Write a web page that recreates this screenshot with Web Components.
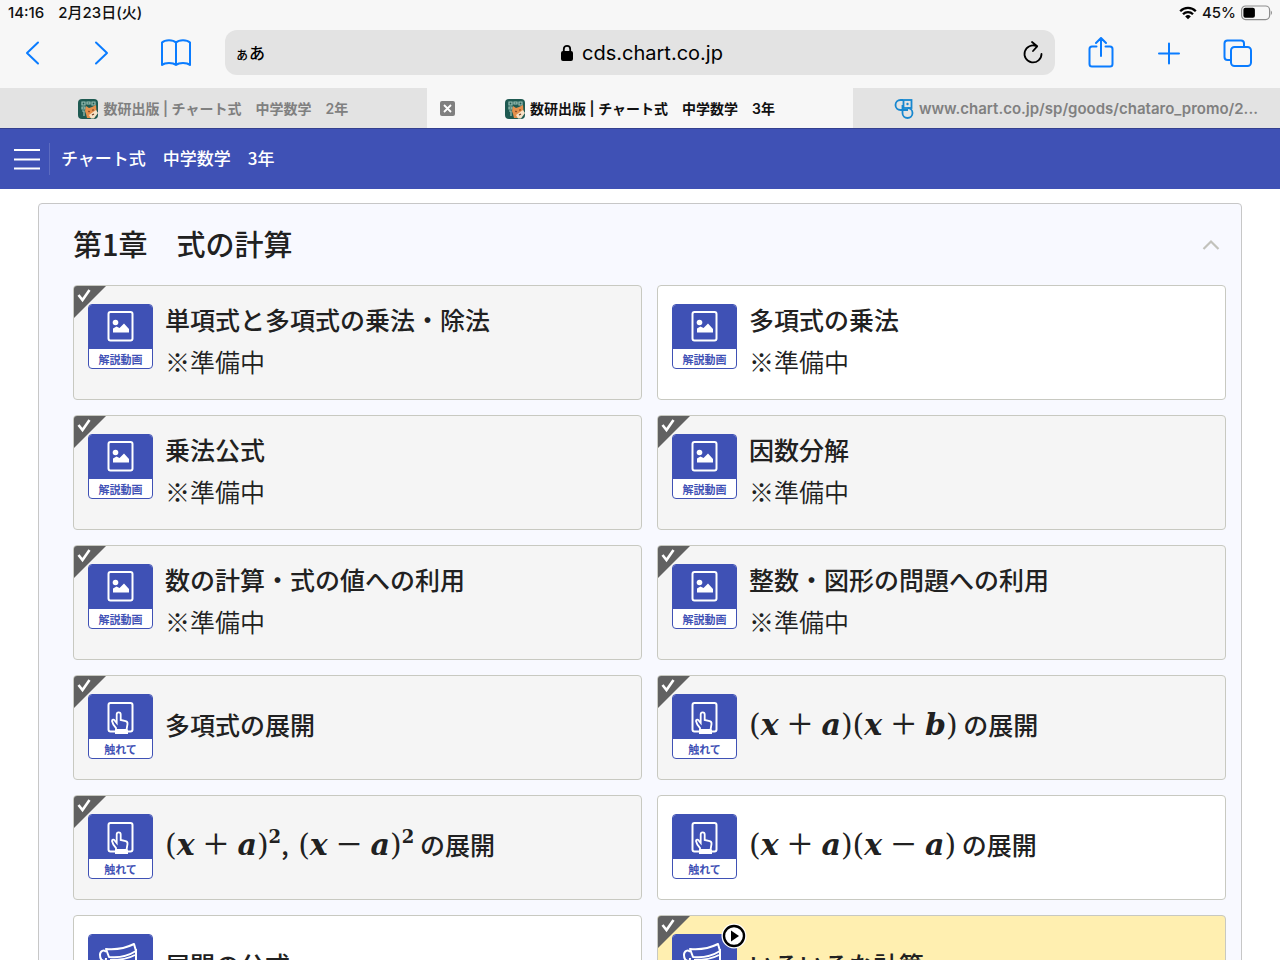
<!DOCTYPE html>
<html lang="ja">
<head>
<meta charset="utf-8">
<meta name="viewport" content="width=device-width, initial-scale=1">
<title>数研出版 | チャート式　中学数学　3年</title>
<style>
	body {
		margin: 0;
		background: #fff;
		color: #212121;
		font-family: Inter, 'Noto Sans CJK JP', sans-serif;
		--page-font: 'Noto Sans CJK JP', sans-serif;
	}
</style>
</head>
<body>
<chart-app>
	<status-bar slot="chrome" time="14:16" date="2月23日(火)" battery="45"></status-bar>
	<browser-toolbar slot="chrome" host="cds.chart.co.jp"></browser-toolbar>
	<tab-strip slot="chrome">
		<browser-tab icon="book">数研出版 | チャート式　中学数学　2年</browser-tab>
		<browser-tab icon="book" active>数研出版 | チャート式　中学数学　3年</browser-tab>
		<browser-tab icon="chart">www.chart.co.jp/sp/goods/chataro_promo/2...</browser-tab>
	</tab-strip>
	<app-header slot="chrome">チャート式　中学数学　3年</app-header>
	<chapter-panel heading="第1章　式の計算">
		<lesson-card kind="video" done note="※準備中">単項式と多項式の乗法・除法</lesson-card>
		<lesson-card kind="video" note="※準備中">多項式の乗法</lesson-card>
		<lesson-card kind="video" done note="※準備中">乗法公式</lesson-card>
		<lesson-card kind="video" done note="※準備中">因数分解</lesson-card>
		<lesson-card kind="video" done note="※準備中">数の計算・式の値への利用</lesson-card>
		<lesson-card kind="video" done note="※準備中">整数・図形の問題への利用</lesson-card>
		<lesson-card kind="touch" done>多項式の展開</lesson-card>
		<lesson-card kind="touch" done><math-text>(x+a)(x+b)</math-text> の展開</lesson-card>
		<lesson-card kind="touch" done><math-text>(x+a)^2</math-text>,<math-text>(x−a)^2</math-text> の展開</lesson-card>
		<lesson-card kind="touch"><math-text>(x+a)(x−a)</math-text> の展開</lesson-card>
		<lesson-card kind="cards">展開の公式</lesson-card>
		<lesson-card kind="cards" done current>いろいろな計算</lesson-card>
	</chapter-panel>
</chart-app>

<script>
class ChartApp extends HTMLElement {
	connectedCallback() {
		this.attachShadow({ mode: 'open' })
		this.shadowRoot.innerHTML = `
		<style>
			:host {
				display: flex;
				flex-direction: column;
				height: 100vh;
			}
			main {
				flex: 1;
				min-height: 0;
				overflow-y: auto;
				scrollbar-width: none;
				padding: 14px 38px;
			}
		</style>
		<slot name="chrome"></slot>
		<main><slot></slot></main>
		`;
	}
}

class StatusBar extends HTMLElement {
	connectedCallback() {
		let battery = this.getAttribute('battery');
		this.attachShadow({ mode: 'open' })
		this.shadowRoot.innerHTML = `
		<style>
			:host {
				display: flex;
				align-items: center;
				gap: 14px;
				height: 26px;
				padding: 0 8px;
				background: #f7f7f7;
				color: #111;
				font-size: 15px;
				line-height: 24px;
				font-weight: 500;
				white-space: nowrap;
			}
			.right {
				display: flex;
				align-items: center;
				gap: 5px;
				margin-left: auto;
			}
			svg { display: block; }
		</style>
		<span>${this.getAttribute('time')}</span>
		<span>${this.getAttribute('date')}</span>
		<div class="right">
			<svg width="18" height="14" viewBox="0 0 18 14" fill="none" stroke="#000" stroke-width="2.3">
				<path d="M1.2 5.2a11 11 0 0 1 15.6 0M4 8.2a7 7 0 0 1 10 0"/>
				<path d="M9 13.2L6.2 10.4a4 4 0 0 1 5.6 0z" fill="#000" stroke="none"/>
			</svg>
			<span>${battery}%</span>
			<svg width="31" height="16" viewBox="0 0 31 16">
				<rect x=".6" y="1" width="28" height="13.6" rx="4" fill="none" stroke="#8d8d8d" stroke-width="1.2"/>
				<rect x="2.4" y="2.8" width="11.5" height="10" rx="2" fill="#000"/>
				<path d="M29.800 5.4a3 3 0 0 1 0 4.8z" fill="#8d8d8d"/>
			</svg>
		</div>
		`;
	}
}

class BrowserToolbar extends HTMLElement {
	connectedCallback() {
		this.attachShadow({ mode: 'open' })
		this.shadowRoot.innerHTML = `
		<style>
			:host {
				display: flex;
				align-items: center;
				height: 62px;
				padding: 0 27px 9px 25px;
				box-sizing: border-box;
				background: #f7f7f7;
				--blue: #0a7cff;
			}
			button {
				border: 0;
				padding: 0;
				background: none;
				color: inherit;
				font: inherit;
				display: block;
			}
			svg {
				display: block;
				fill: none;
				stroke: var(--blue);
				stroke-width: 2;
				stroke-linecap: round;
				stroke-linejoin: round;
			}
			.nav { display: flex; gap: 52px; margin-right: 32px; }
			.actions { display: flex; gap: 36px; margin-left: 30px; }
			.address {
				flex: 1;
				display: flex;
				align-items: center;
				height: 45px;
				padding: 0 10px;
				border-radius: 12px;
				background: #e3e3e3;
				color: #000;
			}
			.aa { width: 42px; text-align: left; font-size: 16px; font-weight: 500; white-space: nowrap; font-family: var(--page-font); line-height: 24px; }
			.aa small { font-size: 14px; }
			.host {
				flex: 1;
				display: flex;
				align-items: center;
				justify-content: center;
				gap: 9px;
				font-size: 20px;
			}
			.reload svg { stroke: #000; stroke-width: 1.8; }
			.reload { width: 24px; margin-left: 14px; }
		</style>
		<div class="nav">
			<button aria-label="戻る"><svg width="16" height="32"><path d="M13 5.500L2 16l11 10.500"/></svg></button>
			<button aria-label="進む"><svg width="16" height="32"><path d="M3 5.500L14 16L3 26.500"/></svg></button>
			<button aria-label="ブックマーク"><svg width="32" height="32"><path d="M15 5.500C12 2.500 4 2.500 1 5.500V28c3-2.800 11-2.800 14 0 3-2.800 11-2.800 14 0V5.500c-3-3-11-3-14 0zM15 5.500V28"/></svg></button>
		</div>
		<div class="address">
			<button class="aa" aria-label="表示メニュー"><small>ぁ</small>あ</button>
			<div class="host">
				<svg width="12" height="18" viewBox="0 0 12 18"><rect x="1" y="8" width="10" height="8" rx="1" fill="#000" stroke="#000"/><path d="M2.800 8V5a3.200 3.200 0 0 1 6.400 0v3" stroke="#000" stroke-width="1.800"/></svg>
				<span>${this.getAttribute('host')}</span>
			</div>
			<button class="reload" aria-label="再読み込み"><svg width="24" height="26" viewBox="0 0 24 26"><path d="M20.500 14a8.500 8.500 0 1 1-5-7.800M11 2l5.200 4.300L12 11"/></svg></button>
		</div>
		<div class="actions">
			<button aria-label="共有"><svg width="32" height="32"><path d="M11.500 9.500H7a2.500 2.500 0 0 0-2.500 2.500v15A2.500 2.500 0 0 0 7 29.500h18a2.500 2.500 0 0 0 2.500-2.500V12A2.500 2.500 0 0 0 25 9.500h-4.500M16 19V1.500M11 6l5-5 5 5"/></svg></button>
			<button aria-label="新規タブ"><svg width="32" height="32"><path d="M16 6.500v20M6 16.500h20"/></svg></button>
			<button aria-label="タブ一覧"><svg width="32" height="32"><rect x="10" y="10" width="20" height="19" rx="3.500"/><path d="M9.500 23H6.500a3 3 0 0 1-3-3V6.500A3 3 0 0 1 6.500 3.500h13.500a3 3 0 0 1 3 3V9.500"/></svg></button>
		</div>
		`;
	}
}

class TabStrip extends HTMLElement {
	connectedCallback() {
		this.attachShadow({ mode: 'open' })
		this.shadowRoot.innerHTML = `
		<style>
			:host {
				display: grid;
				grid-template-columns: repeat(3, 1fr);
				height: 41px;
				background: #f7f7f7;
				border-bottom: 1px solid #34408f;
				box-sizing: border-box;
			}
		</style>
		<slot></slot>
		`;
	}
}

const tabIcons = {
	book: `
		<rect width="20" height="20" rx="4" fill="#1f5a52"/>
		<path d="M4 3h3v3H4zM9 3h3v2H9zM14 3h3v3h-3zM4 8h3v2H4zM4 12h2v5" fill="none" stroke="#9cc2b6" stroke-width="1.200"/>
		<path d="M7 12l1-5 3 2 3-1 4-2 .5 7-5.500 6H9l-1-4z" fill="#e5904c"/>
		<path d="M11 16l7-5 2 3-4 5.500h-3z" fill="#f7e3c8"/>
		<path d="M10.500 12l1 1M14.500 11.500l1-1M14 16l2-1" stroke="#6d351c" stroke-width="1.200"/>`,
	chart: `
		<g fill="none" stroke="#1787cf" stroke-width="1.800">
			<path d="M9 1H6.500a5 5 0 0 0 0 10H14"/>
			<rect x="9.500" y="1" width="8" height="8"/>
			<path d="M8.500 6v8a5 5 0 1 0 5-5"/>
		</g>
		<circle cx="13.500" cy="5" r="1.200" fill="#1787cf"/>`
};

class BrowserTab extends HTMLElement {
	connectedCallback() {
		let active = this.hasAttribute('active');
		this.attachShadow({ mode: 'open' })
		this.shadowRoot.innerHTML = `
		<style>
			:host {
				display: flex;
				align-items: center;
				min-width: 0;
				padding: 1px 13px 0;
				background: #e3e3e3;
				color: #808080;
				font-size: 14px;
				line-height: 20px;
				font-weight: 600;
			}
			:host([active]) {
				background: #f7f7f7;
				color: #111;
			}
			.close {
				flex: none;
				width: 15px;
				height: 15px;
				border: 0;
				padding: 0;
				border-radius: 2px;
				background: #808080;
			}
			.spacer { width: 15px; flex: none; }
			a {
				flex: 1;
				display: flex;
				align-items: center;
				justify-content: center;
				gap: 5px;
				min-width: 0;
				margin-right: 15px;
				color: inherit;
				text-decoration: none;
				white-space: nowrap;
			}
			:host([icon="chart"]) a { justify-content: flex-end; margin-right: 9px; font-size: 15px; }
			a svg { flex: none; }
			svg { display: block; }
		</style>
		${active ? '<button class="close" aria-label="閉じる"><svg width="15" height="15" stroke="#fff" stroke-width="1.800"><path d="M4 4l7 7M11 4l-7 7"/></svg></button>' : '<span class="spacer"></span>'}
		<a href="#">
			<svg width="20" height="20">${tabIcons[this.getAttribute('icon')]}</svg>
			<span><slot></slot></span>
		</a>
		`;
	}
}

class AppHeader extends HTMLElement {
	connectedCallback() {
		this.attachShadow({ mode: 'open' })
		this.shadowRoot.innerHTML = `
		<style>
			:host {
				display: flex;
				align-items: center;
				height: 60px;
				padding-left: 14px;
				box-sizing: border-box;
				background: #3f51b5;
				color: #fff;
			}
			button {
				border: 0;
				border-right: 1px solid #5c6bc0;
				padding: 5px 9px 5px 0;
				background: none;
			}
			svg { display: block; }
			h1 {
				margin: 0 0 2px 11px;
				font-family: var(--page-font);
				font-size: 17px;
				line-height: 24px;
				font-weight: 500;
			}
		</style>
		<button aria-label="メニュー"><svg width="26" height="22" stroke="#fff" stroke-width="2"><path d="M0 2h26M0 11.500h26M0 20.500h26"/></svg></button>
		<h1><slot></slot></h1>
		`;
	}
}

class ChapterPanel extends HTMLElement {
	connectedCallback() {
		this.attachShadow({ mode: 'open' })
		this.shadowRoot.innerHTML = `
		<style>
			:host {
				display: block;
				padding: 0 15px 15px 34px;
				border: 1px solid #c7c7c7;
				border-radius: 4px;
				background: #f8f9ff;
			}
			header {
				display: flex;
				align-items: center;
				justify-content: space-between;
				height: 81px;
			}
			h2 {
				margin: 0 0 4px;
				font-family: var(--page-font);
				font-size: 29px;
				line-height: 42px;
				font-weight: 500;
			}
			button {
				border: 0;
				padding: 0 6px;
				background: none;
			}
			svg { display: block; }
			.grid {
				display: grid;
				grid-template-columns: 1fr 1fr;
				gap: 15px;
			}
		</style>
		<header>
			<h2>${this.getAttribute('heading')}</h2>
			<button aria-label="閉じる"><svg width="18" height="12" fill="none" stroke="#c2c2bc" stroke-width="2.200"><path d="M1.500 10L9 2.500l7.500 7.500"/></svg></button>
		</header>
		<div class="grid"><slot></slot></div>
		`;
	}
}

const kinds = {
	video: {
		label: '解説動画',
		art: `
			<rect x="20.500" y="8" width="24" height="28.500" rx="2" fill="none" stroke="#fff" stroke-width="2"/>
			<circle cx="27.500" cy="18.500" r="2.800" fill="#fff"/>
			<path d="M25 28.500v-4l3.500-2 3 1.500 4.500-4.500 5 5.500v3.500z" fill="#fff"/>`
	},
	touch: {
		label: '触れて',
		art: `
			<rect x="20.500" y="9" width="24" height="28.500" rx="2" fill="none" stroke="#fff" stroke-width="2"/>
			<path d="M28 36v-2c-2-2-3.500-4.500-4-7 0-1.500 1.800-1.800 2.700-.5l2 2.500v-8.500c0-2.800 4-2.800 4 0V26l5 1.200c1.500.4 2 1.300 1.800 2.800L38.500 36z" fill="#3f51b5" stroke="#fff" stroke-width="1.800"/>
			<rect x="27" y="35.500" width="13" height="4.500" fill="#fff"/>`
	},
	cards: {
		label: '暗記',
		art: `
			<g fill="none" stroke="#fff" stroke-width="2" stroke-linejoin="round">
				<path d="M18 15c10 1 20-1 28-5l2 7c-8 5-18 7-27 6z" fill="#3f51b5"/>
				<path d="M48 15v17c-9 5-20 6-31 5l1-13M22 26c9 0 18-1 25-5"/>
				<path d="M18 18c-2-3-6-1-6 3s2 6 5 6"/>
			</g>`
	}
};

class LessonCard extends HTMLElement {
	connectedCallback() {
		let kind = kinds[this.getAttribute('kind')];
		let note = this.getAttribute('note');
		this.attachShadow({ mode: 'open' })
		this.shadowRoot.innerHTML = `
		<style>
			:host {
				display: block;
				position: relative;
				border: 1px solid #c8c9c1;
				border-radius: 4px;
				background: #fff;
				font-family: var(--page-font);
				overflow: hidden;
			}
			:host([done]) { background: #f5f5f5; }
			:host([current]) { background: #ffefb0; }
			a {
				display: flex;
				align-items: flex-start;
				gap: 12px;
				min-height: 103px;
				box-sizing: border-box;
				padding: 18px 14px 14px;
				color: inherit;
				text-decoration: none;
			}
			:host([note]) a { min-height: 113px; }
			.icon {
				flex: none;
				display: flex;
				flex-direction: column;
				width: 65px;
				height: 65px;
				box-sizing: border-box;
				border: 1px solid #3f51b5;
				border-radius: 4px;
				background: #fff;
				overflow: hidden;
			}
			.icon svg {
				display: block;
				margin: -1px;
				flex: none;
				background: #3f51b5;
			}
			.icon span {
				flex: 1;
				display: flex;
				align-items: center;
				justify-content: center;
				padding-top: 2px;
				color: #3f51b5;
				font-size: 11px;
				font-weight: 700;
				line-height: 16px;
			}
			.text {
				flex: 1;
				padding-top: 9px;
				font-size: 25px;
				line-height: 42px;
			}
			:host([note]) .text { padding-top: 0; margin: -6px 0; }
			.title { font-weight: 500; }
			.note { font-weight: 350; }
			.done {
				position: absolute;
				left: 0;
				top: 0;
			}
			.play {
				position: absolute;
				left: 63px;
				top: 7px;
			}
		</style>
		<a href="#">
			<div class="icon">
				<svg width="65" height="45">${kind.art}</svg>
				<span>${kind.label}</span>
			</div>
			<div class="text">
				<div class="title"><slot></slot></div>
				${note ? `<div class="note">${note}</div>` : ''}
			</div>
		</a>
		${this.hasAttribute('done') ? '<svg class="done" width="34" height="34"><path d="M0 0h32L0 32z" fill="#616161"/><path d="M4.500 9l4 5L15.500 4" fill="none" stroke="#fff" stroke-width="2.600"/></svg>' : ''}
		${this.hasAttribute('current') ? '<svg class="play" width="26" height="26"><circle cx="13" cy="13" r="12.500" fill="#fff"/><circle cx="13" cy="13" r="10" fill="#fff" stroke="#000" stroke-width="2.400"/><path d="M10 7.500l8 5.500-8 5.500z"/></svg>' : ''}
		`;
	}
}

// small formula renderer: binary operators get air around them, ^n becomes a superscript
class MathText extends HTMLElement {
	connectedCallback() {
		let html = this.textContent
			.replace(/([xab])/g, '<i>$1</i>')
			.replace(/\^(\d)/g, '<sup>$1</sup>')
			.replace(/([+−])/g, '<span class="op">$1</span>');
		this.attachShadow({ mode: 'open' })
		this.shadowRoot.innerHTML = `
		<style>
			:host {
				font-family: 'DejaVu Serif', serif;
				font-size: 30px;
				line-height: 1;
				font-weight: 400;
				white-space: nowrap;
			}
			i { font-weight: 700; }
			.op {
				margin: 0 9px;
				font-family: 'Liberation Serif', serif;
				font-size: 44px;
				line-height: 0;
				vertical-align: -4px;
			}
			sup {
				font-size: 18px;
				font-weight: 700;
				line-height: 0;
				vertical-align: 12px;
			}
		</style>${html}`;
	}
}

window.customElements.define('chart-app', ChartApp)
window.customElements.define('status-bar', StatusBar)
window.customElements.define('browser-toolbar', BrowserToolbar)
window.customElements.define('tab-strip', TabStrip)
window.customElements.define('browser-tab', BrowserTab)
window.customElements.define('app-header', AppHeader)
window.customElements.define('chapter-panel', ChapterPanel)
window.customElements.define('math-text', MathText)
window.customElements.define('lesson-card', LessonCard)
</script>
</body>
</html>
